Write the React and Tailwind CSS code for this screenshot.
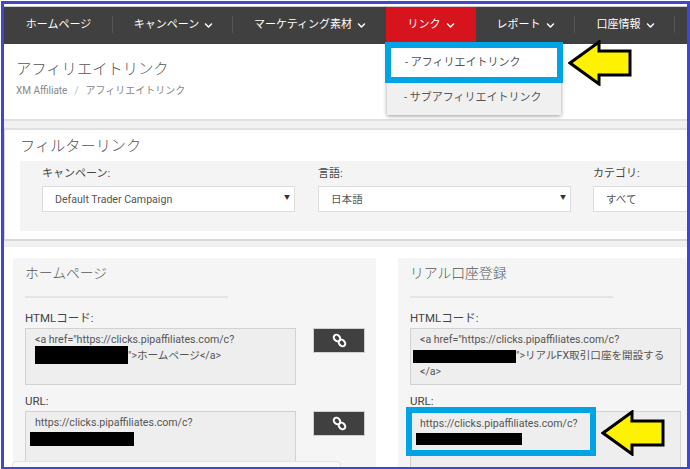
import { FaChevronDown } from 'react-icons/fa';

const font = { fontFamily: '"Roboto", "Noto Sans CJK JP", sans-serif' };

function NavItem({ label, chevron, className = '', divider = true }) {
  return (
    <div className={`relative flex h-full items-center justify-center gap-[5px] text-[11px] text-white ${className}`}>
      <span>{label}</span>
      {chevron && <FaChevronDown className="h-[9px] w-[9px]" />}
      {divider && <span className="absolute right-0 top-[9px] h-[17px] w-px bg-[#555555]" />}
    </div>
  );
}

function Arrow({ className }) {
  return (
    <svg className={`absolute ${className}`} viewBox="0 0 64 46" fill="#fff200" stroke="#000000" strokeWidth="3">
      <path d="M2 23 L31 2 V11 H62 V35 H31 V44 Z" />
    </svg>
  );
}

function Redact({ className }) {
  return <span className={`inline-block bg-black align-middle ${className}`} />;
}

function CodeBox({ children, className = '' }) {
  return (
    <div className={`w-[271px] shrink-0 border border-[#d2d2d2] bg-[#eeeeee] pl-[9px] pt-[3px] text-[10.6px] leading-[16px] text-[#555555] ${className}`}>
      {children}
    </div>
  );
}

function LinkButton() {
  return (
    <button className="flex h-[25px] w-[52px] items-center justify-center border border-[#d0d0d0] bg-[#404040]">
      <svg className="h-[15px] w-[15px]" viewBox="0 0 15 15" fill="none" stroke="#ffffff" strokeWidth="2">
        <ellipse cx="5" cy="5" rx="3.6" ry="2.9" transform="rotate(45 5 5)" />
        <ellipse cx="10" cy="10" rx="3.6" ry="2.9" transform="rotate(45 10 10)" />
      </svg>
    </button>
  );
}

function LinkPanel({ title, html, url, className = '', showButtons = true }) {
  return (
    <div className={`bg-[#f5f5f5] pl-[12px] pt-[5px] ${className}`}>
      <h3 className="text-[13.8px] font-light leading-[20px] text-[#555555]">{title}</h3>
      <div className="mt-[13px] h-[2px] w-[203px] bg-[#e4e4e4]" />
      <div className="mt-[13px] text-[11.5px] leading-[15px] text-[#444444]">HTMLコード:</div>
      <div className="mt-[2px] flex items-start gap-[17px]">
        <CodeBox className="h-[57px]">{html}</CodeBox>
        {showButtons && <LinkButton />}
      </div>
      <div className="mt-[9px] text-[11.5px] leading-[15px] text-[#444444]">URL:</div>
      <div className="mt-[2px] flex items-start gap-[17px]">
        <CodeBox className="h-[60px]">{url}</CodeBox>
        {showButtons && <LinkButton />}
      </div>
    </div>
  );
}

function FilterSelect({ label, value, className = '', arrow = true }) {
  return (
    <div className={className}>
      <div className="text-[11px] leading-[16px] text-[#444444]">{label}</div>
      <div className="mt-[4px] flex h-[26px] items-center justify-between border border-[#dddddd] bg-white pl-[12px] pr-[4px] text-[10.6px] text-[#555555]">
        <span className="pt-px">{value}</span>
        {arrow && <span className="-translate-y-[2px] text-[6px] leading-none text-[#333333]">▼</span>}
      </div>
    </div>
  );
}

export default function App() {
  return (
    <div className="h-[469px] w-[690px] overflow-hidden bg-white pl-px pt-px" style={font}>
      <div className="relative h-[468px] w-[689px] overflow-hidden border-[3px] border-b-2 border-[#3f48cc] bg-white">
        <div className="h-[3px] border-b border-[#cccccc]" />

        {/* top nav */}
        <nav className="flex h-[37px] items-center bg-[#404040] pl-[1px]">
          <NavItem label="ホームページ" className="w-[108px] pr-px" />
          <NavItem label="キャンペーン" chevron className="w-[120px] pl-px" />
          <NavItem label="マーケティング素材" chevron divider={false} className="w-[153px] pl-px" />
          <NavItem label="リンク" chevron divider={false} className="w-[90px] bg-[#d7141e]" />
          <NavItem label="レポート" chevron className="w-[99px]" />
          <NavItem label="口座情報" chevron className="w-[100px] pl-px" />
        </nav>

        {/* page title */}
        <header className="h-[75px] pl-[12px] pt-[14px]">
          <h1 className="text-[15.3px] font-light leading-[22px] text-[#555555]">アフィリエイトリンク</h1>
          <div className="mt-[4px] flex items-center text-[10px] leading-[14px] text-[#888888]">
            <span>XM Affiliate</span>
            <span className="mx-[7px] text-[#bbbbbb]">/</span>
            <span>アフィリエイトリンク</span>
          </div>
        </header>

        <div className="h-[11px] border-y-2 border-[#e0e0e0] bg-[#f1f1f1]" />

        {/* filter */}
        <section className="h-[111px] border-b-2 border-l border-[#d8d8d8] pl-[15px] pt-[4px]">
          <h2 className="text-[15.2px] font-light leading-[24px] text-[#555555]">フィルターリンク</h2>
          <div className="mt-[3px] flex h-[70px] gap-[23px] bg-[#f4f4f4] pl-[22px] pt-[5px]">
            <FilterSelect label="キャンペーン:" value="Default Trader Campaign" className="w-[253px] shrink-0" />
            <FilterSelect label="言語:" value="日本語" className="w-[253px] shrink-0" />
            <FilterSelect label="カテゴリ:" value="すべて" arrow={false} className="-ml-px w-[140px] shrink-0" />
          </div>
        </section>

        <div className="h-[6px] border-b border-[#eeeeee] bg-[#f1f1f1]" />

        {/* link panels */}
        <section className="flex gap-[22px] pl-[9px] pt-[11px]">
          <LinkPanel
            title="ホームページ"
            className="h-[220px] w-[363px] shrink-0"
            html={
              <>
                {'<a href="https://clicks.pipaffiliates.com/c?'}
                <br />
                <Redact className="-my-[2px] h-[18px] w-[93px] -translate-y-px" />
                {'">ホームページ</a>'}
              </>
            }
            url={
              <>
                https://clicks.pipaffiliates.com/c?
                <br />
                <Redact className="-ml-[5px] h-[14px] w-[104px]" />
              </>
            }
          />
          <LinkPanel
            title="リアル口座登録"
            showButtons={false}
            className="h-[220px] w-[300px] shrink-0"
            html={
              <>
                {'<a href="https://clicks.pipaffiliates.com/c?'}
                <br />
                <Redact className="-ml-[7px] h-[13px] w-[103px]" />
                {'">リアルFX取引口座を開設する'}
                <br />
                {'</a>'}
              </>
            }
            url={<span />}
          />
        </section>

        {/* dropdown under リンク */}
        <div className="absolute left-[383px] top-[40px] h-[71px] w-[174px] bg-[#f0f0f0] shadow-[0_1px_4px_rgba(0,0,0,0.4)]">
          <div className="-mx-[2px] -mt-[2px] flex h-[41px] items-center border-[6px] border-[#00a4e4] bg-white pl-[14px] pt-px text-[11px] text-[#555555]">
            - アフィリエイトリンク
          </div>
          <div className="flex h-[30px] items-center pl-[17px] text-[11px] text-[#555555]">- サブアフィリエイトリンク</div>
        </div>
        <Arrow className="left-[564px] top-[36px] h-[46px] w-[64px]" />

        {/* highlighted url */}
        <div className="absolute left-[402px] top-[403px] h-[49px] w-[190px] border-[6px] border-[#00a4e4] bg-[#eeeeee] pl-[8px] pt-[3px] text-[10.6px] leading-[16px] text-[#555555]">
          https://clicks.pipaffiliates.com/c?
          <br />
          <Redact className="-ml-[4px] h-[12px] w-[106px] -translate-y-px" />
        </div>
        <Arrow className="left-[597px] top-[406px] h-[46px] w-[64px]" />

        {/* cut off tooltip at the bottom */}
        <div className="absolute left-[8px] top-[457px] h-[12px] w-[329px] rounded-t-[3px] border border-[#e2e2e2] bg-[#f8f8f8]" />
      </div>
    </div>
  );
}
